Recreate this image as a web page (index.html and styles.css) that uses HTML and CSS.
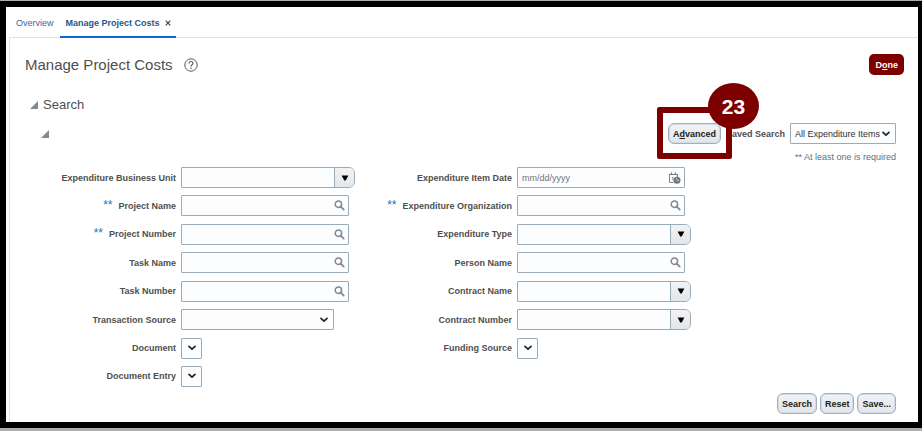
FILE: index.html
```html
<!DOCTYPE html>
<html lang="en">
<head>
<meta charset="utf-8">
<title>Manage Project Costs</title>
<link rel="stylesheet" href="styles.css">
</head>
<body>
<svg class="symbols" aria-hidden="true">
  <symbol id="lens" viewBox="0 0 11 11"><circle cx="4.4" cy="4.2" r="3.2" fill="none" stroke="#85888b" stroke-width="1.5"/><path d="M6.800 6.700 9.700 9.600" stroke="#85888b" stroke-width="1.800" stroke-linecap="round"/></symbol>
  <symbol id="chevron" viewBox="0 0 8 6"><path d="M1 1.300 4 4.200 7 1.300" fill="none" stroke="#222" stroke-width="1.700" stroke-linecap="round" stroke-linejoin="round"/></symbol>
  <symbol id="arrow" viewBox="0 0 8 6"><path d="M.6.5h6.800L4.700 5.500H3.300z" fill="#000"/></symbol>
  <symbol id="disclose" viewBox="0 0 8 8"><path d="M8 0v8H0z" fill="#85898d"/></symbol>
</svg>
<div class="frame">
  <nav class="tabs">
    <a class="tab" href="#overview">Overview</a>
    <div class="tab active">
      <a href="#costs">Manage Project Costs</a>
      <button class="close" type="button" aria-label="Close tab"><svg width="6" height="6" viewBox="0 0 6 6"><path d="M.7.7 5.300 5.300M5.300.7.7 5.300" stroke="#444" stroke-width="1.200"/></svg></button>
    </div>
  </nav>
  <main class="panel">
    <header class="title-bar">
      <h1>Manage Project Costs</h1>
      <button class="help" type="button" aria-label="Help"><svg width="14" height="14" viewBox="0 0 14 14"><circle cx="7" cy="7" r="6.200" fill="none" stroke="#555" stroke-width="1"/><path d="M5 5.500C5 4.200 5.900 3.500 7 3.500s2 .7 2 1.800c0 1.400-2 1.500-2 3.200" fill="none" stroke="#555" stroke-width="1.100"/><circle cx="7" cy="10.300" r=".75" fill="#555"/></svg></button>
      <button class="done" type="button">D<u>o</u>ne</button>
    </header>
    <div class="section">
      <button class="toggle" type="button" aria-label="Collapse Search"><svg width="8" height="8"><use href="#disclose"/></svg></button>
      <h2>Search</h2>
    </div>
    <div class="toolbar">
      <button class="toggle" type="button" aria-label="Collapse criteria"><svg width="8" height="8"><use href="#disclose"/></svg></button>
      <div class="callout">
        <button class="btn" type="button">A<u>d</u>vanced</button>
        <span class="callout-box"></span>
        <span class="callout-number">23</span>
      </div>
      <label for="saved">Saved Search</label>
      <span class="select saved"><select id="saved"><option>All Expenditure Items</option></select><svg><use href="#chevron"/></svg></span>
    </div>
    <p class="hint">** At least one is required</p>
    <form class="criteria">
      <div class="row"><label for="unit">Expenditure Business Unit</label><span class="combo"><input id="unit" type="text"><button type="button" aria-label="Open list"><svg><use href="#arrow"/></svg></button></span></div>
      <div class="row"><label for="pname"><span class="req">**</span>Project Name</label><span class="lookup"><input id="pname" type="text"><button type="button" aria-label="Find"><svg><use href="#lens"/></svg></button></span></div>
      <div class="row"><label for="pnum"><span class="req">**</span>Project Number</label><span class="lookup"><input id="pnum" type="text"><button type="button" aria-label="Find"><svg><use href="#lens"/></svg></button></span></div>
      <div class="row"><label for="tname">Task Name</label><span class="lookup"><input id="tname" type="text"><button type="button" aria-label="Find"><svg><use href="#lens"/></svg></button></span></div>
      <div class="row"><label for="tnum">Task Number</label><span class="lookup"><input id="tnum" type="text"><button type="button" aria-label="Find"><svg><use href="#lens"/></svg></button></span></div>
      <div class="row"><label for="source">Transaction Source</label><span class="select wide"><select id="source"><option></option></select><svg><use href="#chevron"/></svg></span></div>
      <div class="row"><label for="doc">Document</label><span class="select small"><select id="doc"><option></option></select><svg><use href="#chevron"/></svg></span></div>
      <div class="row"><label for="entry">Document Entry</label><span class="select small"><select id="entry"><option></option></select><svg><use href="#chevron"/></svg></span></div>
      <div class="row"><label for="date">Expenditure Item Date</label><span class="lookup"><input id="date" type="text" placeholder="mm/dd/yyyy"><button class="calendar" type="button" aria-label="Select date"><svg viewBox="0 0 13 12"><path d="M1.500 10.500V2.500h8v2.500M1.500 10.500h4" fill="none" stroke="#85888b"/><path d="M1 2.500h9M3.500.5v2.500M7.500.5v2.500" stroke="#777" stroke-width="1.200"/><path d="M4 5.500h1v3" fill="none" stroke="#85888b"/><circle cx="9" cy="8.200" r="3.500" fill="#77797b"/><path d="M8.500 6.300 9.200 8.400h1.800" fill="none" stroke="#ddd" stroke-width=".8"/></svg></button></span></div>
      <div class="row"><label for="org"><span class="req">**</span>Expenditure Organization</label><span class="lookup"><input id="org" type="text"><button type="button" aria-label="Find"><svg><use href="#lens"/></svg></button></span></div>
      <div class="row"><label for="type">Expenditure Type</label><span class="combo"><input id="type" type="text"><button type="button" aria-label="Open list"><svg><use href="#arrow"/></svg></button></span></div>
      <div class="row"><label for="person">Person Name</label><span class="lookup"><input id="person" type="text"><button type="button" aria-label="Find"><svg><use href="#lens"/></svg></button></span></div>
      <div class="row"><label for="cname">Contract Name</label><span class="combo"><input id="cname" type="text"><button type="button" aria-label="Open list"><svg><use href="#arrow"/></svg></button></span></div>
      <div class="row"><label for="cnum">Contract Number</label><span class="combo"><input id="cnum" type="text"><button type="button" aria-label="Open list"><svg><use href="#arrow"/></svg></button></span></div>
      <div class="row"><label for="fund">Funding Source</label><span class="select small"><select id="fund"><option></option></select><svg><use href="#chevron"/></svg></span></div>
    </form>
    <footer class="actions">
      <button class="btn" type="button">Search</button>
      <button class="btn" type="button">Reset</button>
      <button class="btn" type="button">Save...</button>
    </footer>
  </main>
</div>
</body>
</html>
```
FILE: styles.css
```css
* { box-sizing: border-box; }

body {
  margin: 0;
  min-height: 100vh;
  display: flex;
  flex-direction: column;
  padding: 1px 0 3px;
  background: #adadad;
  color: #4f4f4f;
  font: 9px/12px "Liberation Sans", Arial, sans-serif;
}

button, input, select { font: inherit; color: inherit; margin: 0; }
button { padding: 0; border: 0; background: none; }
svg { display: block; }
.symbols { position: absolute; width: 0; height: 0; }

.frame {
  flex: 1;
  display: flex;
  flex-direction: column;
  border: solid #000;
  border-width: 6px 4px 6px 6px;
  background: #fff;
}

/* Tabs */
.tabs {
  display: flex;
  height: 30px;
  padding-left: 10px;
  gap: 6px;
}
.tab {
  display: flex;
  align-items: center;
  gap: 5px;
  color: #3b6a99;
  text-decoration: none;
  padding-top: 2px;
}
.tab a { color: inherit; text-decoration: none; }
.tab.active {
  position: relative;
  padding: 2px 5px 0 6px;
  color: #24588f;
  font-weight: bold;
}
.tab.active::after {
  content: "";
  position: absolute;
  left: 0;
  right: 0;
  bottom: -1px;
  height: 2px;
  background: #0b69d0;
}

/* Page panel */
.panel {
  flex: 1;
  display: flex;
  flex-direction: column;
  margin-left: 3px;
  padding-bottom: 8px;
  border: solid #dfe4e9;
  border-width: 1px 0 0 1px;
}
.title-bar {
  display: flex;
  align-items: center;
  gap: 11px;
  padding: 16px 14px 0 15px;
}
h1, h2, p { margin: 0; font-weight: normal; }
h1 { font-size: 15px; line-height: 20px; }
h2 { font-size: 13px; line-height: 16px; }
.done {
  height: 21px;
  margin-left: auto;
  padding: 0 6px;
  border-radius: 5px;
  background: #7c0000;
  color: #fff;
  font-weight: bold;
}
.section {
  display: flex;
  align-items: center;
  gap: 5px;
  padding: 22px 0 0 20px;
}
.toolbar {
  display: flex;
  align-items: center;
  gap: 5px;
  padding: 10px 22px 0 31px;
}
.toolbar label { font-weight: bold; }
.hint {
  padding: 7px 22px 4px 0;
  text-align: right;
  color: #5d7186;
}

.btn {
  height: 21px;
  padding: 0 4px;
  border: 1px solid #9fb0c0;
  border-radius: 6px;
  background: linear-gradient(#f1f3f5, #e3e6ea);
  box-shadow: inset 0 0 0 1px #d3dbe2;
  color: #1c1c1c;
  font-weight: bold;
}

/* Numbered marker laid over the Advanced button */
.callout { position: relative; margin-left: auto; }
.callout .btn { display: block; }
.callout-box {
  position: absolute;
  inset: -16px -11px -15px -11px;
  border: 6px solid #7c0000;
  border-radius: 2px;
  pointer-events: none;
}
.callout-number {
  position: absolute;
  left: 40px;
  top: -40px;
  width: 51px;
  height: 46px;
  border-radius: 50%;
  background: #7c0000;
  color: #fff;
  font-size: 21px;
  font-weight: bold;
  line-height: 47px;
  text-align: center;
}

/* Search criteria */
.criteria {
  flex: 1;
  display: grid;
  grid-auto-flow: column;
  grid-template: repeat(8, auto) / 336px 336px;
  align-content: space-between;
  padding-left: 9px;
}
.row {
  display: grid;
  grid-template-columns: 1fr 174px;
  align-items: center;
  gap: 5px;
}
.row label { text-align: right; font-weight: bold; }
.req {
  margin-right: 6px;
  color: #2b70b5;
  font-size: 12px;
  font-weight: normal;
  line-height: 9px;
}

input, select { min-width: 0; outline: none; }
input { flex: 1; padding: 0 4px; border: 0; background: none; }
input::placeholder { color: #757575; opacity: 1; }
.lookup, .combo, .select {
  display: flex;
  align-items: center;
  height: 21px;
  border: 1px solid #9aabb8;
  border-radius: 1px;
  background: #fbfdff;
}
.lookup { width: 168px; }
.lookup button { margin-right: 3px; }
.lookup svg { width: 11px; height: 11px; }
.lookup .calendar svg { width: 13px; height: 12px; }
.combo { border-radius: 1px 6px 6px 1px; overflow: hidden; }
.combo button {
  display: flex;
  align-items: center;
  justify-content: center;
  align-self: stretch;
  width: 20px;
  border-left: 1px solid #9aabb8;
  background: linear-gradient(#f1f3f5, #e3e6ea);
}
.combo svg { width: 8px; height: 6px; }

.select { position: relative; }
.select select {
  width: 100%;
  height: 100%;
  padding: 0 4px;
  border: 0;
  background: none;
  appearance: none;
}
.select svg {
  position: absolute;
  right: 5px;
  width: 8px;
  height: 6px;
  pointer-events: none;
}
.saved { width: 106px; color: #333; }
.wide { width: 153px; }
.small { width: 21px; }

.actions {
  display: flex;
  justify-content: flex-end;
  gap: 3px;
  padding: 6px 22px 0 0;
}
```
